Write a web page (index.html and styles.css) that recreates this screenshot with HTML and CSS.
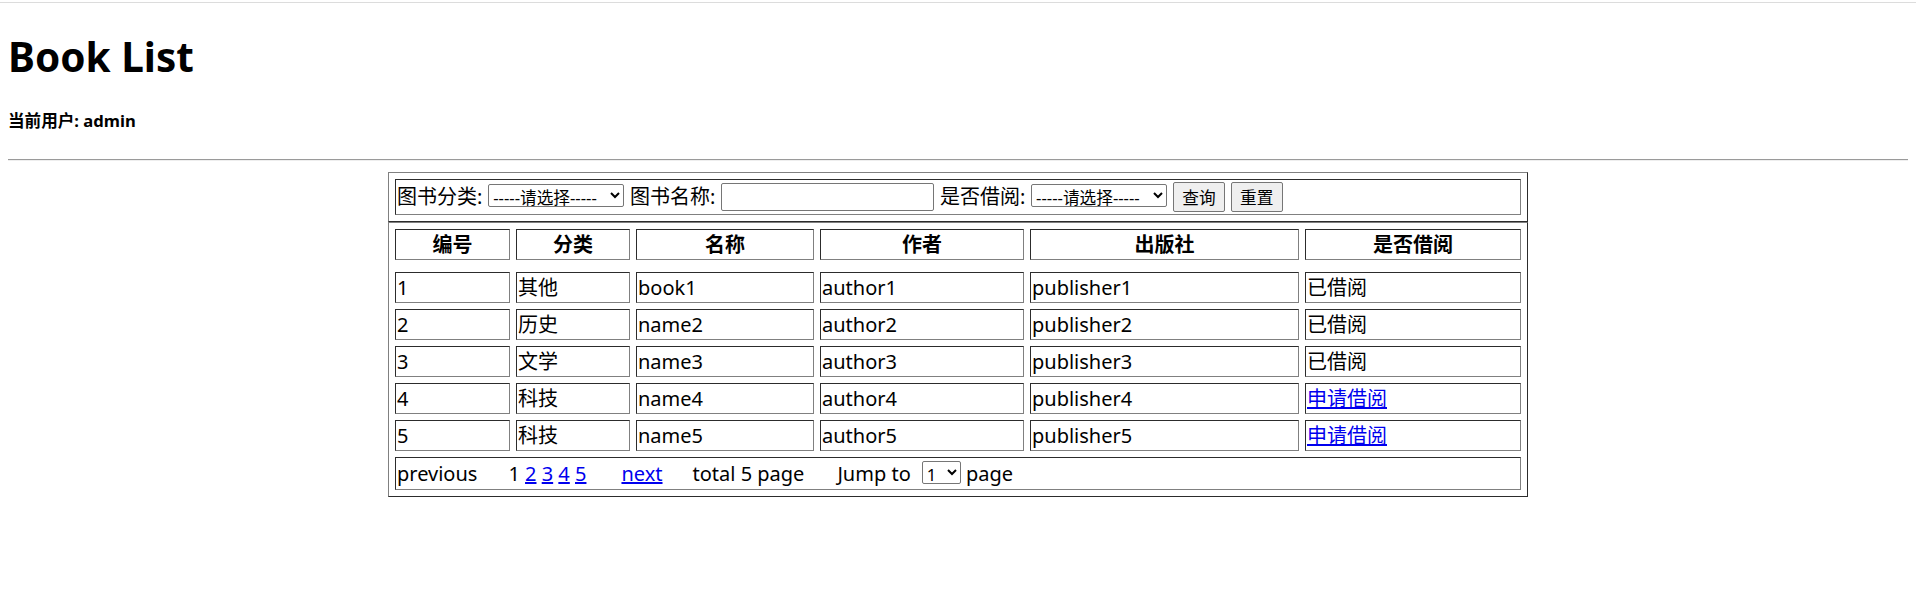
FILE: index.html
```html
<!DOCTYPE html>
<html lang="zh-CN">
<head>
<meta charset="utf-8">
<title>Book List</title>
<link rel="stylesheet" href="styles.css">
</head>
<body>
<div class="topline"></div>
<div class="page">
  <h1 class="title">Book List</h1>
  <h5 class="user">当前用户: admin</h5>
  <hr class="rule">
  <form class="search-form">
    <table class="frame">
      <tr class="form-row">
        <td class="form-cell">图书分类: <select class="sel"><option>-----请选择-----</option></select> 图书名称: <input class="name-input" type="text"> 是否借阅: <select class="sel"><option>-----请选择-----</option></select> <button class="btn" type="button">查询</button> <button class="btn" type="reset">重置</button></td>
      </tr>
    </table>
  </form>
  <table class="frame books">
    <tr class="head-row">
      <th class="c-id">编号</th>
      <th class="c-cat">分类</th>
      <th class="c-name">名称</th>
      <th class="c-author">作者</th>
      <th class="c-pub">出版社</th>
      <th class="c-state">是否借阅</th>
    </tr>
    <tr class="spacer"><td colspan="6"></td></tr>
    <tr><td>1</td><td>其他</td><td>book1</td><td>author1</td><td>publisher1</td><td>已借阅</td></tr>
    <tr><td>2</td><td>历史</td><td>name2</td><td>author2</td><td>publisher2</td><td>已借阅</td></tr>
    <tr><td>3</td><td>文学</td><td>name3</td><td>author3</td><td>publisher3</td><td>已借阅</td></tr>
    <tr><td>4</td><td>科技</td><td>name4</td><td>author4</td><td>publisher4</td><td><a href="#">申请借阅</a></td></tr>
    <tr><td>5</td><td>科技</td><td>name5</td><td>author5</td><td>publisher5</td><td><a href="#">申请借阅</a></td></tr>
    <tr class="pager-row">
      <td colspan="6" class="pager">previous<span class="pg-nums">1 <a href="#">2</a> <a href="#">3</a> <a href="#">4</a> <a href="#">5</a></span><a class="pg-next" href="#">next</a><span class="pg-total">total 5 page</span><span class="pg-jump">Jump to<select class="pg-sel"><option>1</option></select> page</span></td>
    </tr>
  </table>
</div>
</body>
</html>
```
FILE: styles.css
```css
html, body {
  margin: 0;
  padding: 0;
  background: #ffffff;
}
body {
  font-family: "Noto Sans", "Noto Sans CJK SC", sans-serif;
  font-size: 20px;
  line-height: 1.32;
  color: #000000;
}
.topline {
  height: 1px;
  margin-top: 2px;
  background: #dcdcdc;
}
.page {
  padding: 0 8px;
}
.title {
  font-size: 40.5px;
  font-weight: 700;
  line-height: 53px;
  margin: 26.8px 0 0;
}
.user {
  font-size: 16.6px;
  font-weight: 700;
  line-height: 22px;
  margin: 27.7px 0 0;
}
.rule {
  height: 0;
  margin: 26.5px 0 11px;
  border: 0;
  border-top: 1px solid #9a9a9a;
  border-bottom: 1px solid #eeeeee;
}
.search-form {
  margin: 0;
}
.frame {
  width: 60%;
  margin: 0 auto;
  border: 1px outset gray;
  border-spacing: 6px;
}
.frame td,
.frame th {
  border: 1px inset gray;
  padding: 1px;
  line-height: 27px;
}
.form-row {
  height: 36px;
}
.form-cell {
  word-spacing: 0.6px;
  white-space: nowrap;
}
.sel {
  width: 136px;
  height: 23px;
  font-family: "Noto Sans", "Noto Sans CJK SC", sans-serif;
  font-size: 16.67px;
  color: #000;
  background: #fff;
  border: 1px solid #767676;
  border-radius: 2px;
  padding: 0;
  margin: 0;
  word-spacing: 0;
}
.name-input {
  width: 213px;
  height: 28px;
  box-sizing: border-box;
  font-family: "Noto Sans", "Noto Sans CJK SC", sans-serif;
  font-size: 16.67px;
  border: 1px solid #767676;
  border-radius: 2px;
  padding: 1px 2px;
  margin: 0;
}
.btn {
  width: 52px;
  height: 30px;
  box-sizing: border-box;
  font-family: "Noto Sans", "Noto Sans CJK SC", sans-serif;
  font-size: 16.67px;
  color: #000;
  background: #efefef;
  border: 1px solid #767676;
  border-radius: 2px;
  padding: 1px 6px;
  margin: 0;
}
.books {
  table-layout: fixed;
}
.books th {
  font-weight: 700;
  text-align: center;
}
.books td {
  text-align: left;
}
.c-id { width: 111px; }
.c-cat { width: 110px; }
.c-name { width: 174px; }
.c-author { width: 200px; }
.c-pub { width: 265px; }
.c-state { width: 212px; }
.books .spacer td {
  border: 0;
  padding: 0;
  height: 0;
  line-height: 0;
}
.books a {
  color: #0000ee;
  text-decoration: underline;
}
.pager-row {
  height: 33px;
}
.pager {
  white-space: nowrap;
}
.pg-nums {
  margin-left: 31px;
}
.pg-next {
  margin-left: 35px;
}
.pg-total {
  margin-left: 30px;
}
.pg-jump {
  margin-left: 33px;
}
.pg-sel {
  width: 39px;
  height: 23px;
  margin-left: 11px;
  font-family: "Noto Sans", "Noto Sans CJK SC", sans-serif;
  font-size: 16.67px;
  color: #000;
  background: #fff;
  border: 1px solid #767676;
  border-radius: 2px;
  padding: 0;
}
```
